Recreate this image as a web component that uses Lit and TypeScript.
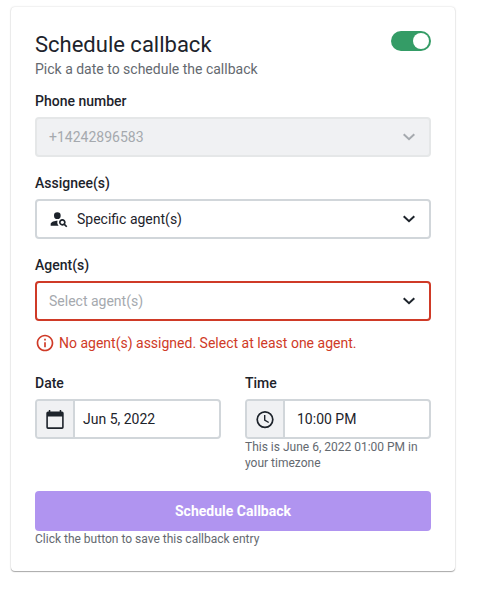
import { LitElement, html, css } from "lit";
import { customElement, property } from "lit/decorators.js";

const chevron = html`<svg width="12" height="8" viewBox="0 0 12 8" fill="none" stroke="currentColor" stroke-width="2">
  <path d="M0.7 1.2 6 6.2l5.3-5"/></svg>`;

const personSearch = html`<svg width="20" height="20" viewBox="0 0 24 24" fill="currentColor">
  <circle cx="10" cy="8" r="4"/>
  <path d="M10.35 14.01C7.62 13.91 2 15.27 2 18v2h9.54c-2.47-2.76-1.23-5.89-1.19-5.99z"/>
  <path d="M19.43 18.02c.36-.59.57-1.28.57-2.02 0-2.21-1.79-4-4-4s-4 1.79-4 4 1.79 4 4 4c.74 0 1.43-.22 2.02-.57L20.59 22 22 20.59l-2.57-2.57zM16 18c-1.1 0-2-.9-2-2s.9-2 2-2 2 .9 2 2-.9 2-2 2z"/></svg>`;

const calendar = html`<svg width="18" height="20" viewBox="0 0 18 20">
  <path fill="currentColor" fill-rule="evenodd" d="M2.800 1h1.500v1.500h9.400V1h1.500v1.500H16a1.700 1.700 0 0 1 1.700 1.700v14a1.700 1.700 0 0 1-1.700 1.700H2a1.700 1.700 0 0 1-1.700-1.700v-14A1.700 1.700 0 0 1 2 2.500h.8zM1.900 7.500v10.800h14.200V7.500z"/></svg>`;

const clock = html`<svg width="18" height="20" viewBox="0 0 18 20" fill="none" stroke="currentColor">
  <circle cx="9" cy="10.600" r="7.800" stroke-width="1.700"/>
  <path stroke-width="1.400" d="M8.700 6v5l4 2.500"/></svg>`;

const info = html`<svg width="20" height="20" viewBox="0 0 24 24" fill="currentColor">
  <path d="M11 7h2v2h-2zm0 4h2v6h-2zm1-9C6.480 2 2 6.480 2 12s4.480 10 10 10 10-4.480 10-10S17.520 2 12 2zm0 18c-4.410 0-8-3.590-8-8s3.590-8 8-8 8 3.590 8 8-3.590 8-8 8z"/></svg>`;

@customElement("select-field")
export class SelectField extends LitElement {
  @property() label = "";
  @property() value = "";
  @property() variant = "";
  @property({ attribute: false }) icon: unknown = null;

  static styles = css`
    :host { display: block; }
    .label { font-weight: 500; line-height: 20px; margin-bottom: 6px; }
    .box {
      box-sizing: border-box; height: 40px; border: 2px solid #d1d6da; border-radius: 4px;
      padding: 0 14px 0 12px; display: flex; align-items: center; gap: 8px; background: #fff;
    }
    .value { flex: 1; }
    .disabled { background: #f0f1f3; border-color: #e5e7e8; color: #a5a9ae; }
    .error { border-color: #cf3a27; }
    .error .value { color: #a5a9ae; }
    svg { display: block; }
  `;

  render() {
    return html`<div class="label">${this.label}</div>
      <div class="box ${this.variant}">${this.icon}<span class="value">${this.value}</span>${chevron}</div>`;
  }
}

@customElement("picker-field")
export class PickerField extends LitElement {
  @property() label = "";
  @property() value = "";
  @property() hint = "";
  @property({ type: Boolean, reflect: true }) wide = false;
  @property({ attribute: false }) icon: unknown = null;

  static styles = css`
    :host { display: block; }
    .label { font-weight: 500; line-height: 20px; margin-bottom: 6px; }
    .box {
      box-sizing: border-box; height: 40px; border: 2px solid #d1d6da; border-radius: 4px;
      display: flex; overflow: hidden;
    }
    .icon {
      width: 36px; border-right: 2px solid #d1d6da; background: #f0f1f3;
      display: flex; align-items: center; justify-content: center;
    }
    .value { line-height: 36px; padding-left: 8px; }
    :host([wide]) .value { padding-left: 12px; }
    .hint { font-size: 12px; line-height: 16px; color: #64696f; }
    svg { display: block; }
  `;

  render() {
    return html`<div class="label">${this.label}</div>
      <div class="box"><div class="icon">${this.icon}</div><div class="value">${this.value}</div></div>
      ${this.hint ? html`<div class="hint">${this.hint}</div>` : null}`;
  }
}

@customElement("app-root")
export class AppRoot extends LitElement {
  static styles = css`
    :host {
      display: block; box-sizing: border-box; height: 597px; padding: 7px 0 0 11px;
      background: #fff; color: #1d232b; font: 14px/20px Roboto, "Liberation Sans", sans-serif;
    }
    .card {
      box-sizing: border-box; width: 444px; height: 564px; padding: 24px; border-radius: 4px;
      background: #fff; box-shadow: 0 0 2px rgba(0, 0, 0, 0.2), 0 1px 1px rgba(0, 0, 0, 0.3);
    }
    .header { display: flex; justify-content: space-between; align-items: flex-start; }
    .title { margin: 0; font-size: 22px; line-height: 28px; font-weight: 400; }
    .subtitle { color: #64696f; line-height: 20px; }
    .toggle {
      box-sizing: border-box; width: 40px; height: 20px; padding: 2px; border-radius: 10px;
      background: #349c66; display: flex; justify-content: flex-end;
    }
    .knob { width: 16px; height: 16px; border-radius: 50%; background: #fff; }
    .fields { display: flex; flex-direction: column; gap: 16px; margin-top: 12px; }
    .message { display: flex; gap: 4px; color: #cf3a27; margin-top: 12px; line-height: 20px; }
    .message svg { display: block; }
    .row { display: grid; grid-template-columns: 186px 186px; gap: 24px; margin-top: 20px; }
    .submit {
      display: block; width: 100%; height: 40px; margin-top: 20px; padding: 0; border: 0; border-radius: 4px;
      background: #b094f0; color: #fff; font: 700 14px/20px Roboto, sans-serif;
    }
    .hint { font-size: 12px; line-height: 16px; color: #64696f; }
  `;

  render() {
    return html`<section class="card">
      <div class="header">
        <div>
          <h1 class="title">Schedule callback</h1>
          <div class="subtitle">Pick a date to schedule the callback</div>
        </div>
        <div class="toggle" role="switch" aria-checked="true"><div class="knob"></div></div>
      </div>
      <div class="fields">
        <select-field label="Phone number" value="+14242896583" variant="disabled"></select-field>
        <select-field label="Assignee(s)" value="Specific agent(s)" .icon=${personSearch}></select-field>
        <select-field label="Agent(s)" value="Select agent(s)" variant="error"></select-field>
      </div>
      <div class="message">${info}<span>No agent(s) assigned. Select at least one agent.</span></div>
      <div class="row">
        <picker-field label="Date" value="Jun 5, 2022" .icon=${calendar}></picker-field>
        <picker-field wide label="Time" value="10:00 PM" hint="This is June 6, 2022 01:00 PM in your timezone" .icon=${clock}></picker-field>
      </div>
      <button class="submit">Schedule Callback</button>
      <div class="hint">Click the button to save this callback entry</div>
    </section>`;
  }
}
